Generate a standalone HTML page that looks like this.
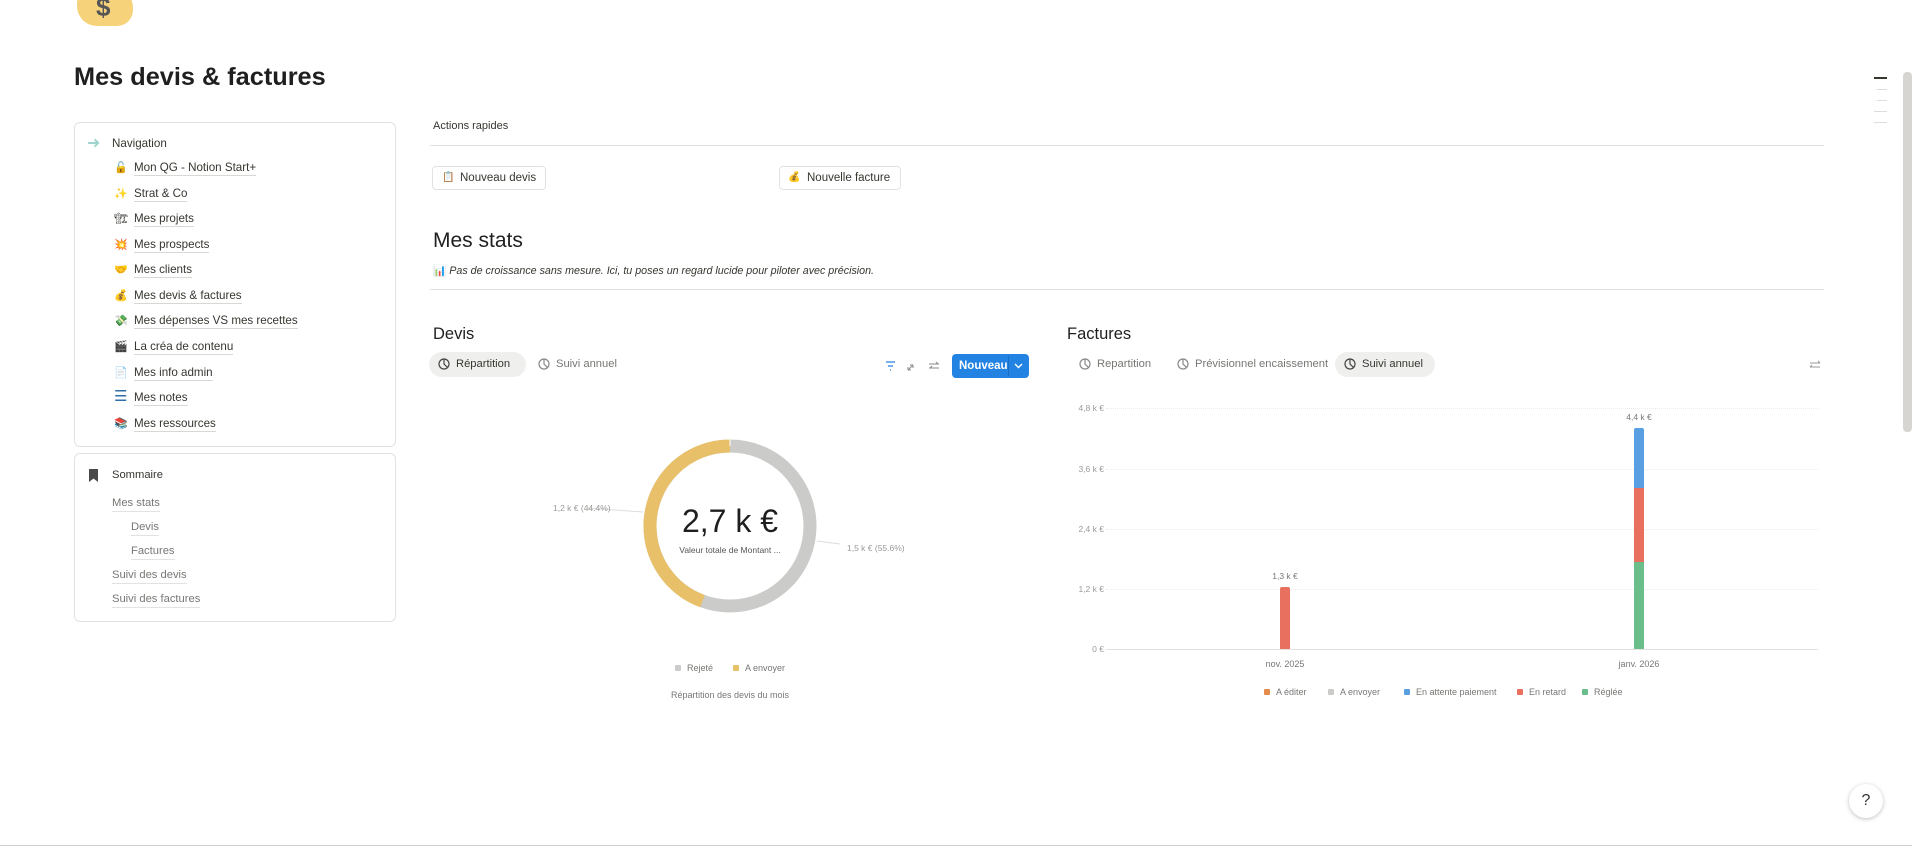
<!DOCTYPE html>
<html><head><meta charset="utf-8">
<style>
*{margin:0;padding:0;box-sizing:border-box}
body{width:1912px;height:847px;overflow:hidden;background:#fff;font-family:"Liberation Sans","Noto Sans CJK SC",sans-serif;color:#37352f;position:relative}
.a{position:absolute;white-space:nowrap}
.box{position:absolute;border:1px solid #e3e2e0;border-radius:6px}
.nv{position:absolute;left:134px;font-size:11.6px;color:#37352f;border-bottom:1px solid #d9d8d5;line-height:15px;white-space:nowrap}
.ic{position:absolute;left:114px;font-size:11px;line-height:14px}
.sm{position:absolute;font-size:11.2px;color:#787774;border-bottom:1px solid #e3e2e0;line-height:15px;white-space:nowrap}
.btn{position:absolute;height:24px;border:1px solid #e3e2e0;border-radius:4px;font-size:11.5px;line-height:22px;padding-left:27px;color:#37352f;white-space:nowrap}
.tab{position:absolute;font-size:11.2px;color:#787774;line-height:25px;height:25px;padding:0 9px 0 27px;border-radius:13px;white-space:nowrap}
.tab svg{position:absolute;left:9px;top:6px}
.yl{position:absolute;font-size:8.5px;color:#9b9a97;left:1060px;width:44px;text-align:right}
.gl{position:absolute;left:1106px;width:712px;border-top:1px dotted #ebebea}
.lg{position:absolute;font-size:9px;color:#787774;white-space:nowrap}
.lg i{display:inline-block;width:6px;height:6px;border-radius:1px;margin-right:6px;vertical-align:0}
</style></head><body>

<div class="a" style="left:77px;top:-14px;width:56px;height:40px;background:#f6d27a;border-radius:18px 22px 16px 20px"></div>
<div class="a" style="left:96px;top:-8px;font-size:26px;font-weight:bold;color:#555">$</div>

<div class="a" style="left:74px;top:63px;font-size:25.3px;font-weight:bold;color:#1f1f1f">Mes devis &amp; factures</div>

<div class="box" style="left:74px;top:122px;width:322px;height:325px"></div>
<div class="a" style="left:87px;top:137px;color:#9fd4cc;font-size:16px;line-height:14px">➜</div>
<div class="a" style="left:112px;top:137px;font-size:11.6px">Navigation</div>
<span class="ic" style="top:161px">🔓</span><div class="nv" style="top:160px">Mon QG - Notion Start+</div>
<span class="ic" style="top:187px">✨</span><div class="nv" style="top:186px">Strat &amp; Co</div>
<span class="ic" style="top:212px">🏗</span><div class="nv" style="top:211px">Mes projets</div>
<span class="ic" style="top:238px">💥</span><div class="nv" style="top:237px">Mes prospects</div>
<span class="ic" style="top:263px">🤝</span><div class="nv" style="top:262px">Mes clients</div>
<span class="ic" style="top:289px">💰</span><div class="nv" style="top:288px">Mes devis &amp; factures</div>
<span class="ic" style="top:314px">💸</span><div class="nv" style="top:313px">Mes dépenses VS mes recettes</div>
<span class="ic" style="top:340px">🎬</span><div class="nv" style="top:339px">La créa de contenu</div>
<span class="ic" style="top:366px">📄</span><div class="nv" style="top:365px">Mes info admin</div>
<span class="ic" style="top:390px;color:#2f6fa8;font-size:15px">☰</span><div class="nv" style="top:390px">Mes notes</div>
<span class="ic" style="top:417px">📚</span><div class="nv" style="top:416px">Mes ressources</div>

<div class="box" style="left:74px;top:453px;width:322px;height:169px"></div>
<svg class="a" style="left:89px;top:469px" width="9" height="13"><path d="M0 0H9V13L4.5 9.5L0 13Z" fill="#4a4a4a"/></svg>
<div class="a" style="left:112px;top:469px;font-size:11.2px;color:#37352f">Sommaire</div>
<div class="sm" style="left:112px;top:496px">Mes stats</div>
<div class="sm" style="left:131px;top:520px">Devis</div>
<div class="sm" style="left:131px;top:544px">Factures</div>
<div class="sm" style="left:112px;top:568px">Suivi des devis</div>
<div class="sm" style="left:112px;top:592px">Suivi des factures</div>

<div class="a" style="left:433px;top:120px;font-size:11px">Actions rapides</div>
<div class="a" style="left:430px;top:145px;width:1394px;border-top:1px solid #e3e2e0"></div>
<div class="btn" style="left:432px;top:166px;width:114px"><span class="a" style="left:9px;top:0;font-size:10px">📋</span>Nouveau devis</div>
<div class="btn" style="left:779px;top:166px;width:122px"><span class="a" style="left:8px;top:0;font-size:10px">💰</span>Nouvelle facture</div>

<div class="a" style="left:433px;top:229px;font-size:21px;color:#1f1f1f">Mes stats</div>
<div class="a" style="left:433px;top:264px;font-size:10.7px;font-style:italic;color:#37352f"><span style="font-style:normal">📊</span> Pas de croissance sans mesure. Ici, tu poses un regard lucide pour piloter avec précision.</div>
<div class="a" style="left:430px;top:289px;width:1394px;border-top:1px solid #e3e2e0"></div>

<div class="a" style="left:433px;top:325px;font-size:16.5px;color:#1f1f1f">Devis</div>
<div class="tab" style="left:429px;top:352px;width:97px;background:#efefee;color:#37352f"><svg width="12" height="12" viewBox="0 0 12 12"><circle cx="6" cy="6" r="5" fill="none" stroke="#444" stroke-width="1.2"/><path d="M6 1V6L9.5 9.5" fill="none" stroke="#444" stroke-width="1.2"/></svg>Répartition</div>
<div class="tab" style="left:529px;top:352px"><svg width="12" height="12" viewBox="0 0 12 12"><circle cx="6" cy="6" r="5" fill="none" stroke="#888" stroke-width="1.2"/><path d="M6 1V6L9.5 9.5" fill="none" stroke="#888" stroke-width="1.2"/></svg>Suivi annuel</div>
<svg class="a" style="left:885px;top:360px" width="56" height="12"><path d="M1 2H10M3 6H8M5 10H6" stroke="#2383e2" stroke-width="1.3"/><path d="M23 10L28 5M28 5H25M28 5V8M23 10V7M23 10H26" stroke="#888" fill="none" stroke-width="1"/><path d="M44 4H54M44 8H54M51 2L53 4M47 6L45 8" stroke="#888" fill="none" stroke-width="1"/></svg>
<div class="a" style="left:952px;top:354px;width:77px;height:24px;background:#2383e2;border-radius:4px;color:#fff;font-size:11.5px;font-weight:bold;line-height:24px;padding-left:7px">Nouveau</div>
<div class="a" style="left:1008px;top:356px;width:1px;height:20px;background:#1a6fc4"></div>
<svg class="a" style="left:1014px;top:363px" width="9" height="6"><path d="M1 1L4.5 4.5L8 1" stroke="#fff" fill="none" stroke-width="1.4"/></svg>

<svg class="a" style="left:530px;top:420px" width="400" height="290">
<circle cx="200" cy="106" r="80" fill="none" stroke="#cbcbca" stroke-width="13"/>
<circle cx="200" cy="106" r="80" fill="none" stroke="#e9c06a" stroke-width="13" stroke-dasharray="223.2 400" transform="rotate(-90 200 106) scale(1,-1) translate(0,-212)" />
<line x1="200" y1="26" x2="200" y2="19" stroke="#fff" stroke-width="1"/>
<path d="M57 88L113 92" stroke="#ddd" stroke-width="1"/>
<path d="M287 121L310 124" stroke="#ddd" stroke-width="1"/>
</svg>
<div class="a" style="left:553px;top:503px;font-size:8.5px;color:#9b9a97">1,2 k € (44.4%)</div>
<div class="a" style="left:847px;top:543px;font-size:8.5px;color:#9b9a97">1,5 k € (55.6%)</div>
<div class="a" style="left:630px;top:503px;width:200px;text-align:center;font-size:32px;color:#1f1f1f">2,7 k €</div>
<div class="a" style="left:630px;top:545px;width:200px;text-align:center;font-size:8.5px;color:#555">Valeur totale de Montant ...</div>
<div class="lg" style="left:675px;top:663px"><i style="background:#cbcbca"></i>Rejeté</div>
<div class="lg" style="left:733px;top:663px"><i style="background:#e9c06a"></i>A envoyer</div>
<div class="a" style="left:630px;top:690px;width:200px;text-align:center;font-size:9px;color:#787774">Répartition des devis du mois</div>

<div class="a" style="left:1067px;top:325px;font-size:16.5px;color:#1f1f1f">Factures</div>
<div class="tab" style="left:1070px;top:352px"><svg width="12" height="12" viewBox="0 0 12 12"><circle cx="6" cy="6" r="5" fill="none" stroke="#888" stroke-width="1.2"/><path d="M6 1V6L9.5 9.5" fill="none" stroke="#888" stroke-width="1.2"/></svg>Repartition</div>
<div class="tab" style="left:1168px;top:352px"><svg width="12" height="12" viewBox="0 0 12 12"><circle cx="6" cy="6" r="5" fill="none" stroke="#888" stroke-width="1.2"/><path d="M6 1V6L9.5 9.5" fill="none" stroke="#888" stroke-width="1.2"/></svg>Prévisionnel encaissement</div>
<div class="tab" style="left:1335px;top:352px;width:100px;background:#efefee;color:#37352f"><svg width="12" height="12" viewBox="0 0 12 12"><circle cx="6" cy="6" r="5" fill="none" stroke="#444" stroke-width="1.2"/><path d="M6 1V6L9.5 9.5" fill="none" stroke="#444" stroke-width="1.2"/></svg>Suivi annuel</div>
<svg class="a" style="left:1809px;top:360px" width="12" height="10"><path d="M1 3H11M1 7H11M9 1L11 3M3 5L1 7" stroke="#999" fill="none" stroke-width="1"/></svg>

<div class="gl" style="top:408px"></div><div class="gl" style="top:469px"></div><div class="gl" style="top:529px"></div><div class="gl" style="top:589px"></div>
<div class="a" style="left:1106px;top:649px;width:712px;border-top:1px solid #e3e2e0"></div>
<div class="yl" style="top:403px">4,8 k €</div><div class="yl" style="top:464px">3,6 k €</div><div class="yl" style="top:524px">2,4 k €</div><div class="yl" style="top:584px">1,2 k €</div><div class="yl" style="top:644px">0 €</div>
<div class="a" style="left:1280px;top:587px;width:10px;height:62px;background:#e8705f;border-radius:2px 2px 0 0"></div>
<div class="a" style="left:1634px;top:428px;width:10px;height:60px;background:#5b9fe3;border-radius:2px 2px 0 0"></div>
<div class="a" style="left:1634px;top:488px;width:10px;height:74px;background:#e8705f"></div>
<div class="a" style="left:1634px;top:562px;width:10px;height:87px;background:#6bbd8a"></div>
<div class="a" style="left:1253px;top:571px;width:64px;text-align:center;font-size:8.5px;color:#787774">1,3 k €</div>
<div class="a" style="left:1607px;top:412px;width:64px;text-align:center;font-size:8.5px;color:#787774">4,4 k €</div>
<div class="a" style="left:1245px;top:659px;width:80px;text-align:center;font-size:9px;color:#787774">nov. 2025</div>
<div class="a" style="left:1599px;top:659px;width:80px;text-align:center;font-size:9px;color:#787774">janv. 2026</div>
<div class="lg" style="left:1264px;top:687px"><i style="background:#e38c4c"></i>A éditer</div>
<div class="lg" style="left:1328px;top:687px"><i style="background:#cbcbca"></i>A envoyer</div>
<div class="lg" style="left:1404px;top:687px"><i style="background:#5b9fe3"></i>En attente paiement</div>
<div class="lg" style="left:1517px;top:687px"><i style="background:#e8705f"></i>En retard</div>
<div class="lg" style="left:1582px;top:687px"><i style="background:#6bbd8a"></i>Réglée</div>

<div class="a" style="left:1874px;top:77px;width:13px;height:2px;background:#37352f"></div>
<div class="a" style="left:1877px;top:89px;width:10px;height:1px;background:#ddd"></div>
<div class="a" style="left:1877px;top:100px;width:10px;height:1px;background:#ddd"></div>
<div class="a" style="left:1874px;top:111px;width:13px;height:1px;background:#ddd"></div>
<div class="a" style="left:1874px;top:122px;width:13px;height:1px;background:#ddd"></div>
<div class="a" style="left:1903px;top:72px;width:9px;height:360px;background:#d6d5d2;border-radius:4px"></div>

<div class="a" style="left:1849px;top:784px;width:34px;height:34px;border-radius:50%;background:#fff;box-shadow:0 1px 4px rgba(0,0,0,.25);font-size:16px;text-align:center;line-height:34px;color:#333">?</div>
<div class="a" style="left:0;top:845px;width:1912px;border-top:1px solid #cfcfcf"></div>
</body></html>
